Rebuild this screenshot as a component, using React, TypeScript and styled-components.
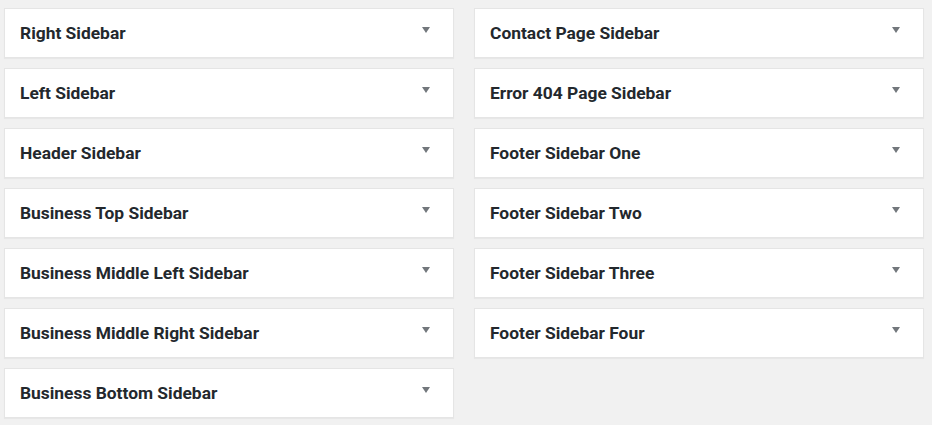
import { FC } from "react";
import styled, { createGlobalStyle } from "styled-components";

const GlobalStyle = createGlobalStyle`
  html, body {
    margin: 0;
    padding: 0;
    background: #f1f1f1;
    font-family: Roboto, "Liberation Sans", sans-serif;
  }
`;

const Page = styled.div`
  display: flex;
  gap: 20px;
  padding: 8px 0 0 4px;
  min-height: 417px;
`;

const Column = styled.ul`
  list-style: none;
  margin: 0;
  padding: 0;
  width: 450px;
  display: flex;
  flex-direction: column;
  gap: 10px;
`;

const Widget = styled.li`
  box-sizing: border-box;
  height: 50px;
  display: flex;
  align-items: center;
  justify-content: space-between;
  padding: 0 23px 0 15px;
  background: #fff;
  border: 1px solid #e5e5e5;
  box-shadow: 0 1px 1px rgba(0, 0, 0, 0.04);
`;

const Title = styled.h2`
  margin: 0;
  font-size: 17.4px;
  font-weight: 700;
  color: #23282d;
`;

const Toggle = styled.span`
  width: 0;
  height: 0;
  margin-top: -6px;
  border-left: 4px solid transparent;
  border-right: 4px solid transparent;
  border-top: 6px solid #72777c;
`;

const left = [
  "Right Sidebar",
  "Left Sidebar",
  "Header Sidebar",
  "Business Top Sidebar",
  "Business Middle Left Sidebar",
  "Business Middle Right Sidebar",
  "Business Bottom Sidebar",
];

const right = [
  "Contact Page Sidebar",
  "Error 404 Page Sidebar",
  "Footer Sidebar One",
  "Footer Sidebar Two",
  "Footer Sidebar Three",
  "Footer Sidebar Four",
];

const SidebarColumn: FC<{ names: string[] }> = ({ names }) => (
  <Column>
    {names.map((name) => (
      <Widget key={name}>
        <Title>{name}</Title>
        <Toggle />
      </Widget>
    ))}
  </Column>
);

const App: FC = () => (
  <>
    <GlobalStyle />
    <Page>
      <SidebarColumn names={left} />
      <SidebarColumn names={right} />
    </Page>
  </>
);

export default App;
